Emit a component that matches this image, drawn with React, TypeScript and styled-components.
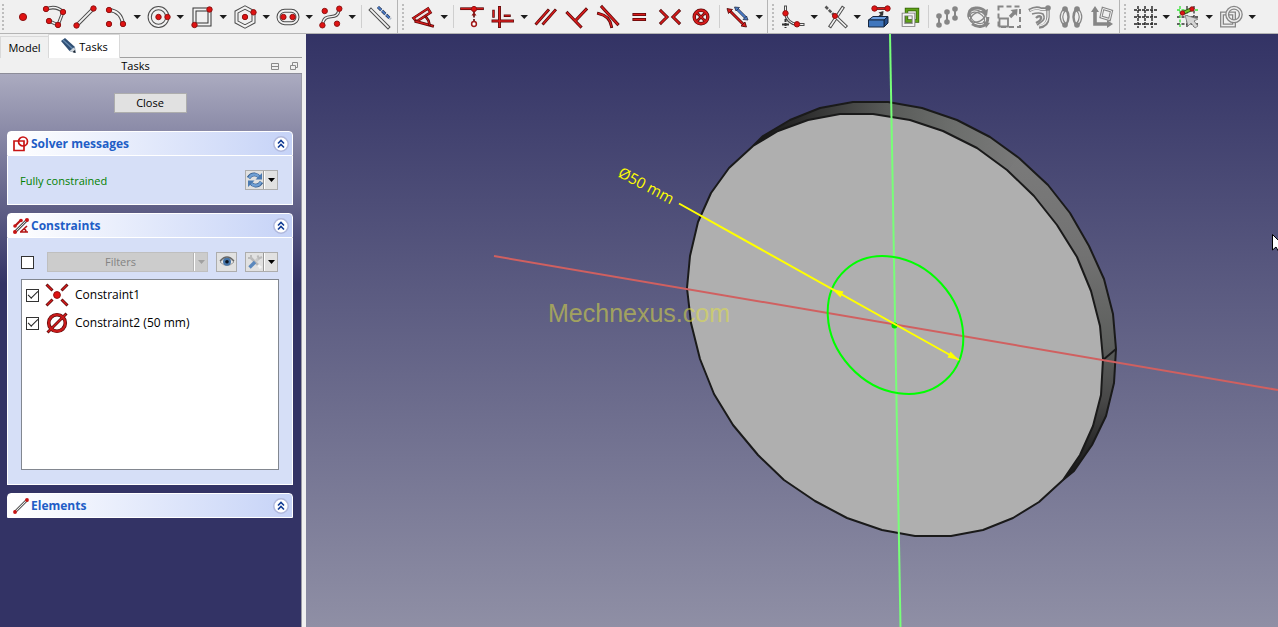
import React from "react";
import styled, { createGlobalStyle } from "styled-components";

const GlobalStyle = createGlobalStyle`
  * { box-sizing: border-box; }
  body {
    margin: 0;
    font-family: "Open Sans", "Noto Sans", sans-serif;
    font-size: 11px;
    line-height: 16px;
    color: #000;
    background: #f0f0f0;
  }
  button, input { font: inherit; margin: 0; color: inherit; }
`;

/* ---------- layout ---------- */

const Window = styled.div`
  display: flex;
  flex-direction: column;
  min-height: 100vh;
`;

const ToolbarArea = styled.header`
  display: flex;
  height: 34px;
  background: #f0f0f0;
  border-bottom: 1px solid #b4b4b4;
  overflow: hidden;
`;

const ToolGroup = styled.div<{ $first?: boolean; $last?: boolean }>`
  display: flex;
  flex: none;
  padding-left: ${(p) => (p.$first ? 2 : 4)}px;
  padding-right: 2px;
  border-right: ${(p) => (p.$last ? 0 : 1)}px solid #b4b4b4;
`;

const Grip = styled.span`
  width: 5px;
  margin: 4px 0 3px;
  border-left: 2px dotted #bdbdbd;
`;

const Separator = styled.span`
  width: 6px;
  display: flex;
  justify-content: center;
  &::before {
    content: "";
    width: 1px;
    margin: 5px 0;
    background: #cfcfcf;
  }
`;

const ToolButton = styled.button`
  display: flex;
  flex: none;
  padding: 0;
  border: 0;
  background: transparent;
  svg { display: block; flex: none; }
`;

const Main = styled.main`
  display: flex;
  flex: 1;
`;

const Sidebar = styled.aside`
  display: flex;
  flex-direction: column;
  flex: none;
  width: 306px;
  padding-right: 4px;
  background: #f0f0f0;
`;

const Viewport = styled.section`
  flex: 1;
  min-width: 0;
  display: grid;
  background: linear-gradient(#333365, #8f8fa5);
  overflow: hidden;
`;

const Scene = styled.svg`
  width: 100%;
  height: 100%;
  display: block;
`;

/* ---------- sidebar parts ---------- */

const Tabs = styled.div`
  display: flex;
  height: 24px;
  border-bottom: 1px solid #a0a0a0;
`;

const Tab = styled.button<{ $active?: boolean }>`
  display: flex;
  align-items: center;
  justify-content: center;
  gap: 2px;
  width: ${(p) => (p.$active ? 72 : 48)}px;
  height: ${(p) => (p.$active ? 24 : 22)}px;
  margin-top: ${(p) => (p.$active ? 0 : 2)}px;
  padding: 0;
  border: 1px solid #d9d9d9;
  border-bottom: 0;
  border-right-width: ${(p) => (p.$active ? 1 : 0)}px;
  background: ${(p) => (p.$active ? "#fff" : "#f0f0f0")};
`;

const TitleBar = styled.div`
  display: grid;
  grid-template-columns: 1fr auto;
  align-items: center;
  height: 16px;
  padding-right: 3px;
  border-bottom: 1px solid #8d8d99;
  text-align: center;
`;

const TitleButtons = styled.div`
  display: flex;
  gap: 10px;
  button { display: flex; padding: 0; border: 0; background: none; }
`;

const TaskArea = styled.div`
  flex: 1;
  display: flex;
  flex-direction: column;
  gap: 8px;
  padding: 19px 8px 18px 7px;
  border-right: 1px solid #9a9aa5;
  background: linear-gradient(#ababc0, #333365 210px);
`;

const CloseButton = styled.button`
  align-self: center;
  width: 73px;
  height: 20px;
  margin-bottom: 10px;
  padding: 0;
  line-height: 18px;
  border: 1px solid #adadad;
  background: #e1e1e1;
`;

const Panel = styled.section`
  display: flex;
  flex-direction: column;
`;

const PanelHeader = styled.header`
  display: flex;
  align-items: center;
  gap: 2px;
  height: 25px;
  padding: 0 3px 0 5px;
  border: 1px solid #fff;
  border-radius: 4px 4px 0 0;
  background: linear-gradient(90deg, #fff, #c6d3f7);
  button {
    display: flex;
    margin-left: auto;
    padding: 0;
    border: 0;
    background: none;
  }
`;

const PanelTitle = styled.h2`
  margin: 0;
  font-size: 12px;
  line-height: 16px;
  font-weight: 700;
  color: #215dc6;
`;

const PanelBody = styled.div`
  display: flex;
  flex-direction: column;
  gap: 7px;
  padding: 14px 13px;
  border: 1px solid #fff;
  border-top: 0;
  background: #d6dff7;
`;

const Row = styled.div`
  display: flex;
  align-items: center;
  gap: 8px;
  height: 20px;
  padding-right: 1px;
`;

const Status = styled.span`
  flex: 1;
  padding-top: 2px;
  margin-left: -1px;
  color: #008000;
`;

const Combo = styled.div`
  display: flex;
  height: 20px;
  border: 1px solid #adadad;
  background: #e1e1e1;
  button {
    display: flex;
    align-items: center;
    justify-content: center;
    padding: 0;
    border: 0;
    background: none;
  }
`;

const ToolCombo = styled(Combo)`
  width: 33px;
  button:first-child { width: 18px; border-right: 1px solid #999; }
  button:last-child { width: 13px; border-left: 1px solid #fff; }
`;

const FilterCombo = styled(Combo)`
  flex: 1;
  border-color: #bfbfbf;
  background: #cccccc;
  color: #838383;
  button:first-child { flex: 1; border-right: 1px solid #b4b4b4; }
  button:last-child { width: 13px; border-left: 1px solid #fff; }
`;

const EyeButton = styled.button`
  display: flex;
  align-items: center;
  justify-content: center;
  width: 21px;
  height: 20px;
  padding: 0;
  border: 1px solid #adadad;
  background: #e1e1e1;
`;

const Check = styled.input`
  appearance: none;
  flex: none;
  width: 13px;
  height: 13px;
  border: 1px solid #333;
  background: #fff;
  display: grid;
  place-items: center;
  &:checked::before {
    content: "";
    width: 9px;
    height: 4px;
    margin-top: -3px;
    border: solid #222;
    border-width: 0 0 1px 1px;
    transform: rotate(-45deg);
  }
`;

const FilterCheck = styled(Check)`
  margin-right: 5px;
`;

const ConstraintList = styled.ul`
  height: 191px;
  margin: 0;
  padding: 1px 4px;
  list-style: none;
  border: 1px solid #828790;
  background: #fff;
  li label {
    display: flex;
    align-items: center;
    height: 28px;
    gap: 6px;
    font-size: 12px;
  }
`;

/* ---------- icon primitives ---------- */

const Red = ({ d, w = 2.4 }: { d: string; w?: number }) => (
  <g fill="none" strokeLinecap="square">
    <path d={d} stroke="#5a0808" strokeWidth={w + 1.3} />
    <path d={d} stroke="#d81c1c" strokeWidth={w - 0.2} />
  </g>
);

const Rail = ({ d, c = "#4c4c4c", w = 3.8 }: { d: string; c?: string; w?: number }) => (
  <g fill="none" strokeLinecap="square">
    <path d={d} stroke={c} strokeWidth={w} />
    <path d={d} stroke="#f2f2f2" strokeWidth={w - 2} />
  </g>
);

const Dot = ({ x, y, r = 2.7 }: { x: number; y: number; r?: number }) => (
  <circle cx={x} cy={y} r={r} fill="#e01212" stroke="#8f1414" strokeWidth="1" />
);

const GDot = ({ x, y }: { x: number; y: number }) => <circle cx={x} cy={y} r="2.8" fill="#868686" />;

const Grey = ({ d, w = 2 }: { d: string; w?: number }) => (
  <path d={d} fill="none" stroke="#868686" strokeWidth={w} />
);

const icons: Record<string, React.ReactNode> = {
  Point: <Dot x={0} y={0} r={3.6} />,
  Polyline: (
    <>
      <Rail d="M-8-8Q2-12 9-5L4 8L-5 4" w={3.4} />
      <Dot x={-8} y={-8} /><Dot x={9} y={-5} /><Dot x={4} y={8} /><Dot x={-5} y={4} />
    </>
  ),
  Line: (
    <>
      <Rail d="M-8 8L8-8" />
      <Dot x={-8.5} y={8.5} /><Dot x={8.5} y={-8.5} />
    </>
  ),
  Arc: (
    <>
      <Rail d="M-7-7Q5-6 7 7" />
      <Dot x={-7} y={-7} /><Dot x={7} y={7} /><Dot x={-7} y={7} />
    </>
  ),
  Circle: (
    <>
      <circle cx="-0.5" r="8.800" fill="none" stroke="#4c4c4c" strokeWidth="4.200" />
      <circle cx="-0.5" r="8.800" fill="none" stroke="#f2f2f2" strokeWidth="2.200" />
      <Dot x={-0.5} y={0} /><Dot x={8.5} y={0} />
    </>
  ),
  Rectangle: (
    <>
      <path d="M-7.500-7.500H7.500V7.500H-7.500Z" fill="none" stroke="#333" strokeWidth="4" />
      <path d="M-7.500-7.500H7.500V7.500H-7.500Z" fill="none" stroke="#f2f2f2" strokeWidth="2" />
      <Dot x={7.5} y={-7.5} /><Dot x={-7.5} y={8} />
    </>
  ),
  Hexagon: (
    <>
      <path d="M0-9.5L8.5-5V5L0 9.5L-8.5 5V-5Z" fill="none" stroke="#4c4c4c" strokeWidth="4" />
      <path d="M0-9.5L8.5-5V5L0 9.5L-8.5 5V-5Z" fill="none" stroke="#f2f2f2" strokeWidth="2" />
      <Dot x={0} y={0} /><Dot x={8.5} y={-4.7} />
    </>
  ),
  Slot: (
    <>
      <rect x="-9.5" y="-6.2" width="19" height="12.4" rx="6.2" fill="none" stroke="#4c4c4c" strokeWidth="4" />
      <rect x="-9.5" y="-6.2" width="19" height="12.4" rx="6.2" fill="none" stroke="#f2f2f2" strokeWidth="2" />
      <Dot x={-4.6} y={0} /><Dot x={4.6} y={0} />
    </>
  ),
  Spline: (
    <>
      <Rail d="M-8.5 8C-7-7 7 6 8-8" w={3.4} />
      <Dot x={-6.3} y={-6} /><Dot x={8.3} y={-8.3} /><Dot x={-8.6} y={8.3} /><Dot x={6} y={6.7} />
    </>
  ),
  "Toggle construction": (
    <>
      <Rail d="M-9-7L8 10" w={3.8} />
      <path d="M-2-10L10.500 2" stroke="#25304a" strokeWidth="3" strokeDasharray="4.500 1.200" />
      <path d="M-2-10L10.500 2" stroke="#4a7ac4" strokeWidth="1.800" strokeDasharray="4.500 1.200" />
    </>
  ),
  Angle: (
    <>
      <path d="M-9.500 1L5-8.500L7.500-4.500L-6.500 4.500Z" fill="#f3e4e4" stroke="#5a0808" strokeWidth="2.600" />
      <path d="M-9.500 1L5-8.500L7.500-4.500L-6.500 4.500Z" fill="none" stroke="#d81c1c" strokeWidth="1.400" />
      <Red d="M-7 4.500L9.500 9" w={1.6} />
      <Red d="M3 0Q6 3 6.500 7.500" w={1.2} />
    </>
  ),
  "Vertical distance": (
    <>
      <Red d="M-10.500-8.300H10.500" w={1.4} />
      <path d="M2-7V6" stroke="#5a0808" strokeWidth="1.600" strokeDasharray="3 1.500" />
      <path d="M-0.500-1.500L2-5L4.500-1.500Z" fill="#8a1010" />
      <Dot x={2} y={-8} r={2.6} />
      <circle cx="2" cy="7" r="2.400" fill="#fff" stroke="#a01818" strokeWidth="1.500" />
    </>
  ),
  "Horizontal or vertical": (
    <>
      <Red d="M-3.500-9.500V9.500M-10 4H9.500" w={1.6} />
      <Red d="M-9.500-6V-0.500M2-1.300H6.500" w={1.2} />
    </>
  ),
  Parallel: <Red d="M-9.500 6.500L2-6.500M-2.500 6.500L9-6.500" w={1.6} />,
  Perpendicular: <Red d="M-9.500-4L3.500 9.500M-1 3L9-7.500" w={1.8} />,
  Tangent: (
    <>
      <Red d="M-9.500-3.500Q2-1 3.500 9.500" w={1.6} />
      <Red d="M-6-10L9.500 7" w={1.8} />
    </>
  ),
  Equal: <Red d="M-5-2.500H5.500M-5 2.500H5.500" w={1.8} />,
  Symmetric: <Red d="M-9-6L-3 0L-9 6M9-6L3 0L9 6" w={1.8} />,
  Block: (
    <>
      <circle r="6.800" fill="none" stroke="#5a0808" strokeWidth="3.400" />
      <Red d="M-4-4L4 4M4-4L-4 4" w={1.4} />
      <circle r="6.800" fill="none" stroke="#d81c1c" strokeWidth="2" />
    </>
  ),
  "Toggle driving": (
    <>
      <Red d="M-8-6L6 8" w={1.6} />
      <path d="M-11-8.500L-5.500-7.500L-9.500-3.500ZM8.500 10L3 9L7 5Z" fill="#d81c1c" stroke="#4a0505" strokeWidth="0.800" />
      <path d="M-1-8L8 1" stroke="#25304a" strokeWidth="3" />
      <path d="M-1-8L8 1" stroke="#4a7ac4" strokeWidth="1.800" />
      <path d="M-3.500-10L1.500-9.500L-2-6ZM10 3L5 2.500L8.500-1Z" fill="#4a7ac4" stroke="#25304a" strokeWidth="0.800" />
    </>
  ),
  Fillet: (
    <>
      <Rail d="M-7.500-10V-4M4 7.500H10" w={3} />
      <Rail d="M-7.500-3Q-6 6 4 7.500" w={3} />
      <path d="M-7.500 2V11M-11 7.500H-3" stroke="#333" strokeWidth="2" strokeDasharray="3 1" />
      <Dot x={-7.500} y={-3.700} /><Dot x={4} y={7.300} />
    </>
  ),
  Trim: (
    <>
      <Rail d="M6.500-9L-5.500 9M-1-1L9.500 9" w={3.600} />
      <path d="M-10.500-10.500L-2-2" stroke="#555" strokeWidth="2.600" strokeDasharray="3.500 1.200" />
      <Dot x={-1} y={-1} r={2.500} />
    </>
  ),
  "External geometry": (
    <>
      <Red d="M-4-8.500H8" w={1.400} />
      <Dot x={-4.500} y={-8.500} /><Dot x={8.500} y={-8.500} />
      <path d="M0 0L3-3" stroke="#333" strokeWidth="2" />
      <path d="M4.500-6L4-1L-0.500-4.500Z" fill="#333" />
      <path d="M-10.500 3L-6-0.500H9L5 3Z" fill="#6c9fe0" stroke="#16263f" />
      <path d="M5 3L9-0.500V6L5 10Z" fill="#274f8c" stroke="#16263f" />
      <path d="M-10.500 3H5V10H-10.500Z" fill="#3f76bd" stroke="#16263f" />
    </>
  ),
  "Carbon copy": (
    <>
      <path d="M-3.500-7.500H7.500V4H-3.500Z" fill="none" stroke="#2f5a06" strokeWidth="3.400" />
      <path d="M-3.500-7.500H7.500V4H-3.500Z" fill="none" stroke="#5fa316" strokeWidth="2" />
      <path d="M-6.500-2.500H3.500V8H-6.500Z" fill="none" stroke="#777" strokeWidth="3.600" />
      <path d="M-6.500-2.500H3.500V8H-6.500Z" fill="none" stroke="#f4f4f4" strokeWidth="1.800" />
    </>
  ),
  "Move": (
    <>
      <Grey d="M-8-1V8M0-5V5M8-8V0" />
      <GDot x={-8} y={-1} /><GDot x={-8} y={8} /><GDot x={0} y={-5} />
      <GDot x={0} y={5} /><GDot x={8} y={-8} /><GDot x={8} y={1} />
    </>
  ),
  Rotate: (
    <>
      <ellipse cx="0" cy="1" rx="9" ry="6" transform="rotate(30)" fill="none" stroke="#868686" strokeWidth="3.400" />
      <ellipse cx="0" cy="1" rx="9" ry="6" transform="rotate(30)" fill="none" stroke="#f0f0f0" strokeWidth="1.200" />
      <ellipse cx="0" cy="0" rx="8" ry="4.500" transform="rotate(-25)" fill="none" stroke="#868686" strokeWidth="1.400" />
      <Grey d="M-9 0Q-10-8-3-9Q3-10 7-6M10 0Q10 8 3 9.500Q-2 10-6 7" w={2.800} />
      <path d="M10-8L9-1L3-5ZM12 6L5 4L8 11Z" fill="#868686" />
    </>
  ),
  Scale: (
    <>
      <path d="M-10.500-10.500H11V10H-10.500Z" fill="none" stroke="#868686" strokeWidth="2" strokeDasharray="5 3" />
      <path d="M-9.500 1.500H-1V9.500H-9.500Z" fill="#f0f0f0" stroke="#868686" strokeWidth="1.800" />
      <Grey d="M1 0L6-5" w={3.400} />
      <path d="M8.500-8L8-1L1.500-7Z" fill="#868686" />
    </>
  ),
  Offset: (
    <>
      <Grey d="M-11-6.500Q-4-10.500 1-8H7M8-9V0Q8 9-1 10" w={3.400} />
      <path d="M-10-6.500Q-4-9.500 1-7.500H7M8-7V0Q7 8-1 9" fill="none" stroke="#f0f0f0" strokeWidth="1.200" />
      <Grey d="M-8-3Q-1-5 3-3Q6 2 1 5L-3 8" w={1.600} />
      <Grey d="M-4 1Q-1-2 1 0Q2 3-4 6" w={2.400} />
      <GDot x={8} y={-9} />
    </>
  ),
  Mirror: (
    <>
      <Grey d="M-6-8Q-13 0-6 8M6-8Q13 0 6 8" w={3.600} />
      <path d="M-6-8Q-13 0-6 8M6-8Q13 0 6 8" fill="none" stroke="#f0f0f0" strokeWidth="1.200" />
      <Grey d="M-5-8Q0 0-5 8M5-8Q0 0 5 8" w={2.400} />
      <GDot x={-6} y={-8} /><GDot x={-6} y={8} /><GDot x={6} y={-8} /><GDot x={6} y={8} />
    </>
  ),
  "Remove axes alignment": (
    <>
      <Grey d="M-7-6V7H7" w={3.600} />
      <path d="M-11-5L-7-11L-3-5ZM5 3L11 7L5 11Z" fill="#868686" />
      <path d="M1-8.500L9.500-6L7.500 2.500L-1 0Z" fill="none" stroke="#868686" strokeWidth="3" />
      <path d="M1-8.500L9.500-6L7.500 2.500L-1 0Z" fill="none" stroke="#f0f0f0" strokeWidth="1" />
    </>
  ),
  Grid: (
    <path
      d="M-7-11V11M0-11V11M7-11V11M-11-7H12M-11 0H12M-11 7H12"
      stroke="#222"
      strokeWidth="1.400"
      strokeDasharray="3 1"
    />
  ),
  Snap: (
    <>
      <path d="M-1-11V11M6-11V11M-11 0H11M-11 7H11" stroke="#333" strokeWidth="1.300" strokeDasharray="3 1.500" />
      <path d="M-8-11V11M-11-7H11" stroke="#35e335" strokeWidth="1.300" strokeDasharray="3 1.500" />
      <path d="M-5-4L4-8" stroke="#1f4d0c" strokeWidth="4" />
      <path d="M-5-4L4-8" stroke="#76c32c" strokeWidth="2" />
      <Dot x={-5.500} y={-4} r={2.200} /><Dot x={4} y={-8} r={2.200} />
      <path d="M-3-2L10 2L6 4L10 9L7 11L3 6L0 9Z" fill="#d4d4d4" stroke="#777" strokeWidth="0.800" />
    </>
  ),
  "Rendering order": (
    <>
      <path d="M-9-3.500H3V8.500H-9Z" fill="none" stroke="#868686" strokeWidth="4" />
      <path d="M-9-3.500H3V8.500H-9Z" fill="none" stroke="#f0f0f0" strokeWidth="1.400" />
      <circle cx="3" cy="-2.500" r="6.800" fill="none" stroke="#868686" strokeWidth="4" />
      <circle cx="3" cy="-2.500" r="6.800" fill="none" stroke="#f0f0f0" strokeWidth="1.400" />
    </>
  ),
};

type Item = string;

/* A trailing "+" marks a tool with a drop-down arrow, "|" is a separator. */
const groups: Item[][] = [
  ["Point", "Polyline", "Line", "Arc+", "Circle+", "Rectangle+", "Hexagon+", "Slot+", "Spline+", "|", "Toggle construction"],
  ["Angle+", "|", "Vertical distance", "Horizontal or vertical+", "Parallel", "Perpendicular", "Tangent", "Equal", "Symmetric", "Block", "|", "Toggle driving+"],
  ["Fillet+", "Trim+", "External geometry", "Carbon copy", "|", "Move", "Rotate", "Scale", "Offset", "Mirror", "Remove axes alignment"],
  ["Grid+", "Snap+", "Rendering order+"],
];

const Tool = ({ item }: { item: Item }) => {
  if (item === "|") return <Separator />;
  const menu = item.endsWith("+");
  const name = menu ? item.slice(0, -1) : item;
  const w = menu ? 43 : 31;
  return (
    <ToolButton aria-label={name}>
      <svg width={w} height="33" viewBox={`-16 -17 ${w} 33`}>
        {icons[name]}
        {menu && <path d="M17.500-2H25L21.250 2Z" fill="#1c1c1c" />}
      </svg>
    </ToolButton>
  );
};

const Arrow = ({ color = "#000" }: { color?: string }) => (
  <svg width="7" height="4" viewBox="0 0 7 4"><path d="M0 0H7L3.500 4Z" fill={color} /></svg>
);

const Collapse = ({ label }: { label: string }) => (
  <button aria-label={`Collapse ${label}`}>
    <svg width="16" height="16" viewBox="0 0 16 16">
      <circle cx="8" cy="8" r="7.200" fill="#fff" stroke="#b0b8dc" strokeWidth="1.500" />
      <path d="M5 7.500L8 4.500L11 7.500M5 11.500L8 8.500L11 11.500" fill="none" stroke="#123c94" strokeWidth="1.600" />
    </svg>
  </button>
);

/* ---------- 3D scene ---------- */

const face =
  "753,146 729,168 711,193 698,222 690,256 687,288 691,323 700,359 714,394 733,425 758,455 784,480 815,501 847,518 882,530 915,536 951,536 983,530 1013,518 1039,502 1063,480 1080,455 1093,426 1101,395 1103,359 1100,326 1091,291 1077,257 1057,225 1034,196 1007,170 977,148 943,131 910,120 873,114 840,114 808,120 778,131";
const rimTop =
  "753,146 763,136 790,120 820,108 853,102 888,102 922,108 957,120 990,137 1020,158 1007,170 977,148 943,131 910,120 873,114 840,114 808,120 778,131";
const rimRight =
  "1019,157 1048,185 1070,213 1089,246 1104,279 1113,314 1116,349 1114,383 1106,416 1092,445 1074,471 1063,480 1080,455 1093,426 1101,395 1103,359 1100,326 1091,291 1077,257 1057,225 1034,196 1007,170";
const rimEdge =
  "753,146 763,136 790,120 820,108 853,102 888,102 922,108 957,120 990,137 1019,158 1048,185 1070,213 1089,246 1104,279 1113,314 1116,349 1114,383 1106,416 1092,445 1074,471 1063,480";

const SketchScene = () => (
  <Scene viewBox="306 34 972 593" preserveAspectRatio="xMidYMid slice" role="img" aria-label="Sketch on disk">
    <defs>
      <linearGradient id="top" gradientUnits="userSpaceOnUse" x1="753" y1="0" x2="1020" y2="0">
        <stop offset="0" stopColor="#151515" />
        <stop offset="0.180" stopColor="#2c2c2c" />
        <stop offset="0.500" stopColor="#585a58" />
        <stop offset="0.750" stopColor="#6c6e6c" />
        <stop offset="1" stopColor="#7a7a7a" />
      </linearGradient>
      <linearGradient id="right" gradientUnits="userSpaceOnUse" x1="0" y1="158" x2="0" y2="480">
        <stop offset="0" stopColor="#7a7a7a" />
        <stop offset="0.300" stopColor="#727272" />
        <stop offset="0.580" stopColor="#5c5e5c" />
        <stop offset="0.750" stopColor="#484848" />
        <stop offset="0.880" stopColor="#2c2c2c" />
        <stop offset="1" stopColor="#151515" />
      </linearGradient>
    </defs>
    <polygon points={rimTop} fill="url(#top)" />
    <polygon points={rimRight} fill="url(#right)" />
    <g stroke="#1a1a1a" strokeWidth="2" strokeLinejoin="round">
      <polyline points={rimEdge} fill="none" />
      <polygon points={face} fill="#afafaf" />
      <path d="M1103 360L1116 349" />
    </g>
    <path d="M494 256L1278 390" stroke="#d06060" strokeWidth="2" />
    <path d="M890 34L900.500 627" stroke="#78ff78" strokeWidth="2" />
    <ellipse cx="895.500" cy="325" rx="74.500" ry="61.700" transform="rotate(47.700 895.500 325)" fill="none" stroke="#00ff00" strokeWidth="2" />
    <circle cx="894.500" cy="325.500" r="3" fill="#00e000" />
    <path d="M679 203.500L959 360" stroke="#ffff00" strokeWidth="2" />
    <path d="M832 289L843.500 291.500L840.500 297.500ZM959 360L947.500 357.500L950.500 351.500Z" fill="#ffff00" />
    <text transform="translate(617 176) rotate(28)" fill="#ffff00" fontFamily="'Open Sans', sans-serif" fontWeight="400" fontSize="15">
      Ø50 mm
    </text>
    <text x="548" y="322" fill="#e4e43c" fillOpacity="0.520" fontFamily="'Liberation Sans', sans-serif" fontSize="25">
      Mechnexus.com
    </text>
    <path d="M1272.500 234.500V250L1276 247L1280 254V242Z" fill="#fff" stroke="#000" />
  </Scene>
);

/* ---------- sidebar icons ---------- */

const PencilIcon = () => (
  <svg width="17" height="17" viewBox="0 0 17 17">
    <path d="M1 3L5 0L15 9L15.500 15L9.500 13Z" fill="#2f4f74" />
    <path d="M3 2L13 11" stroke="#6488ae" strokeWidth="1.500" />
    <path d="M9.500 13L14.500 9L15.500 15Z" fill="#cfd6dd" />
    <path d="M15.500 15L12.500 14L15 12Z" fill="#15202c" />
  </svg>
);

const SolverIcon = () => (
  <svg width="16" height="16" viewBox="0 0 16 16" fill="none" stroke="#c81414" strokeWidth="1.700">
    <path d="M1 5H11V14.500H1Z" /><circle cx="10" cy="5.500" r="4.500" />
  </svg>
);

const ConstraintsIcon = () => (
  <svg width="16" height="16" viewBox="0 0 16 16" fill="none" stroke="#b31414" strokeWidth="2.200">
    <path d="M2 8L8 2" />
    <path d="M2 14L14 2" stroke="#555" strokeWidth="2.800" />
    <path d="M2 14L14 2" stroke="#ddd" strokeWidth="1" />
    <path d="M7.500 14L14 8M7 14H15M11 10Q13 12 13 14" strokeWidth="1.700" />
    <g fill="#c81414" stroke="none">
      <circle cx="2" cy="8" r="1.800" /><circle cx="8" cy="2.500" r="1.800" />
      <circle cx="2" cy="14" r="2" /><circle cx="14" cy="2" r="2" />
    </g>
  </svg>
);

const ElementsIcon = () => (
  <svg width="16" height="16" viewBox="0 0 16 16">
    <path d="M2 14L14 2" stroke="#666" strokeWidth="2.800" />
    <path d="M2 14L14 2" stroke="#e8e8e8" strokeWidth="1" />
    <circle cx="2" cy="14" r="1.900" fill="#c81414" /><circle cx="14" cy="2" r="1.900" fill="#c81414" />
  </svg>
);

const RefreshIcon = () => (
  <svg width="16" height="16" viewBox="0 0 16 16" fill="none">
    <g stroke="#315a8c" strokeWidth="3.800">
      <path d="M1.500 6Q4 2 8 2.500Q11 3 12 5" /><path d="M14.500 10Q12 14 8 13.500Q5 13 4 11" />
    </g>
    <g stroke="#6f9fd4" strokeWidth="2.400">
      <path d="M2 6Q4 2 8 2.500Q11 3 12 5" /><path d="M14 10Q12 14 8 13.500Q5 13 4 11" />
    </g>
    <path d="M15 1V7.500H8.500ZM1 15V8.500H7.500Z" fill="#4a7ab2" />
  </svg>
);

const EyeIcon = () => (
  <svg width="16" height="14" viewBox="0 0 16 14">
    <path d="M1 7Q8-1 15 7Q8 14 1 7Z" fill="#e8e8e8" stroke="#999" />
    <circle cx="8" cy="6.700" r="4" fill="#4675a8" /><circle cx="8" cy="6.700" r="1.800" fill="#0c1520" />
    <path d="M1 6Q8-2 15 6" fill="none" stroke="#666" strokeWidth="1.300" />
  </svg>
);

const ToolsIcon = () => (
  <svg width="16" height="16" viewBox="0 0 16 16" fill="none">
    <path d="M3 3L13 13" stroke="#b9b9b9" strokeWidth="2.600" />
    <path d="M9 7L12 4" stroke="#c9c9c9" strokeWidth="3" />
    <path d="M15 3L12 4.500L10.500 1.500M4 1L4 4L1 4" stroke="#bbb" strokeWidth="2" />
    <path d="M2.500 13.500L8 8" stroke="#5b88bd" strokeWidth="3.400" />
    <path d="M11 11L14 14" stroke="#f4f4f4" strokeWidth="3" />
  </svg>
);

const CoincidentIcon = () => (
  <svg width="24" height="24" viewBox="-12 -12 24 24">
    <Red d="M-9.500-9.500L-5.500-5.500M9.500-9.500L5.500-5.500M-9.500 9.500L-5.500 5.500M9.500 9.500L5.500 5.500" w={1.600} />
    <Dot x={0} y={0} r={3.400} />
  </svg>
);

const DiameterIcon = () => (
  <svg width="24" height="24" viewBox="-12 -12 24 24" fill="none">
    <circle r="8.300" stroke="#5a0808" strokeWidth="3.600" />
    <Red d="M-8.500 8.500L8.500-8.500" w={1.600} />
    <circle r="8.300" stroke="#c81a1a" strokeWidth="2.200" />
  </svg>
);

export default function App() {
  return (
    <Window>
      <GlobalStyle />
      <ToolbarArea>
        {groups.map((group, i) => (
          <ToolGroup key={i} $first={i === 0} $last={i === groups.length - 1}>
            <Grip />
            {group.map((item, j) => <Tool key={j} item={item} />)}
          </ToolGroup>
        ))}
      </ToolbarArea>
      <Main>
        <Sidebar>
          <Tabs role="tablist">
            <Tab role="tab" aria-selected="false">Model</Tab>
            <Tab role="tab" aria-selected="true" $active><PencilIcon />Tasks</Tab>
          </Tabs>
          <TitleBar>
            <span>Tasks</span>
            <TitleButtons>
              <button aria-label="Collapse">
                <svg width="9" height="9" viewBox="0 0 9 9" fill="none" stroke="#8a8a8a"><path d="M0.500 1.500H7.500V7.500H0.500ZM0.500 4.500H7.500" /></svg>
              </button>
              <button aria-label="Float">
                <svg width="9" height="9" viewBox="0 0 9 9" fill="none" stroke="#8a8a8a"><path d="M0.500 3.500H5.500V7.500H0.500ZM2.500 3.500V0.500H7.500V5.500H5.500" /></svg>
              </button>
            </TitleButtons>
          </TitleBar>
          <TaskArea>
            <CloseButton>Close</CloseButton>
            <Panel>
              <PanelHeader><SolverIcon /><PanelTitle>Solver messages</PanelTitle><Collapse label="Solver messages" /></PanelHeader>
              <PanelBody>
                <Row>
                  <Status>Fully constrained</Status>
                  <ToolCombo>
                    <button aria-label="Update"><RefreshIcon /></button>
                    <button aria-label="Update options"><Arrow /></button>
                  </ToolCombo>
                </Row>
              </PanelBody>
            </Panel>
            <Panel>
              <PanelHeader><ConstraintsIcon /><PanelTitle>Constraints</PanelTitle><Collapse label="Constraints" /></PanelHeader>
              <PanelBody>
                <Row>
                  <FilterCheck type="checkbox" aria-label="Enable filters" />
                  <FilterCombo>
                    <button disabled>Filters</button>
                    <button disabled aria-label="Choose filters"><Arrow color="#a0a0a0" /></button>
                  </FilterCombo>
                  <EyeButton aria-label="Show or hide"><EyeIcon /></EyeButton>
                  <ToolCombo>
                    <button aria-label="Settings"><ToolsIcon /></button>
                    <button aria-label="Settings options"><Arrow /></button>
                  </ToolCombo>
                </Row>
                <ConstraintList>
                  <li><label><Check type="checkbox" defaultChecked /><CoincidentIcon />Constraint1</label></li>
                  <li><label><Check type="checkbox" defaultChecked /><DiameterIcon />Constraint2 (50 mm)</label></li>
                </ConstraintList>
              </PanelBody>
            </Panel>
            <Panel>
              <PanelHeader><ElementsIcon /><PanelTitle>Elements</PanelTitle><Collapse label="Elements" /></PanelHeader>
            </Panel>
          </TaskArea>
        </Sidebar>
        <Viewport><SketchScene /></Viewport>
      </Main>
    </Window>
  );
}
